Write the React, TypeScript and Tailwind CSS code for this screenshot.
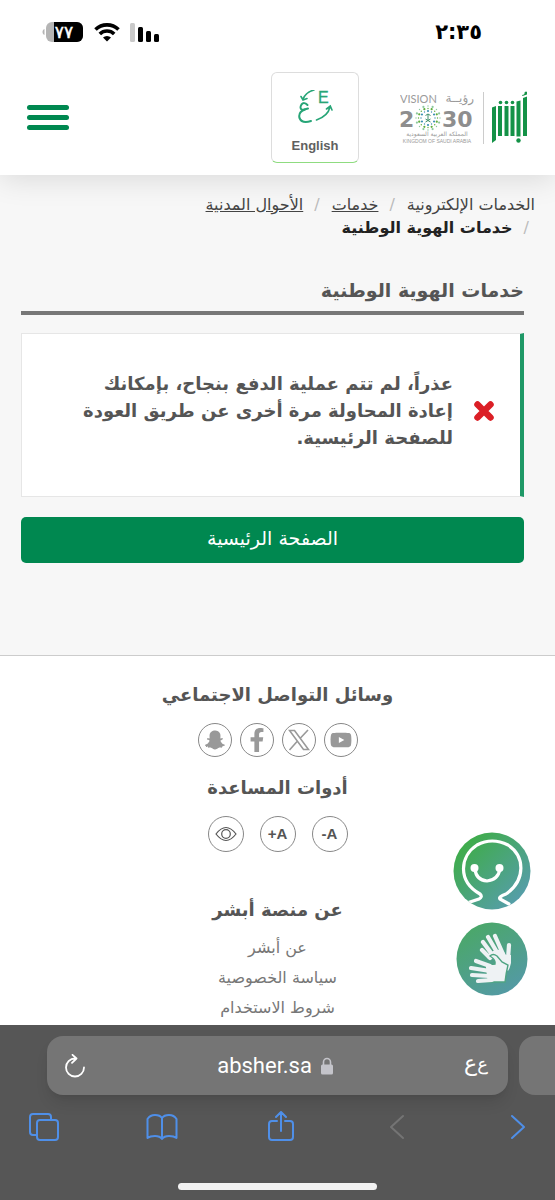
import type { ReactNode } from 'react'
import { FaFacebookF, FaSnapchatGhost, FaYoutube } from 'react-icons/fa'

const crumbs = [
  { label: 'الخدمات الإلكترونية', link: false },
  { label: 'خدمات', link: true },
  { label: 'الأحوال المدنية', link: true },
]

const aboutLinks = ['عن أبشر', 'سياسة الخصوصية', 'شروط الاستخدام']

// ── Status bar ───────────────────────────────────────────────────────────────
function StatusBar() {
  return (
    <div dir="ltr" className="flex h-16 items-center justify-between pl-[42px] pr-[73px] text-black">
      <div className="flex items-center gap-2.5">
        <svg viewBox="0 0 42 20" className="h-5 w-[42px]" aria-hidden="true">
          <path d="M2.500 7v6C1 12.500.5 11 .5 10s.5-2.500 2-3z" fill="#b5b5b5" />
          <rect x="4" y="0" width="37" height="20" rx="6" fill="#b5b5b5" />
          <path d="M12 0h23a6 6 0 0 1 6 6v8a6 6 0 0 1-6 6H12z" fill="#000" />
          <text x="22" y="16" textAnchor="middle" fontSize="17" fill="#fff" stroke="#fff" strokeWidth="0.500" fontFamily="DejaVu Sans, sans-serif">٧٧</text>
        </svg>
        <svg viewBox="0 0 26 19" className="h-[19px] w-[26px]" aria-hidden="true">
          <g fill="none" stroke="#000" strokeWidth="3.600">
            <path d="M1.500 6.500a16.500 16.500 0 0 1 23 0" />
            <path d="M5.800 11a10.300 10.300 0 0 1 14.400 0" />
          </g>
          <path d="M13 18.500 9 14.500a5.800 5.800 0 0 1 8 0z" fill="#000" />
        </svg>
        <svg viewBox="0 0 29 19" className="h-[19px] w-[29px]" aria-hidden="true">
          <rect x="0" y="0" width="5" height="19" rx="1.500" fill="#c9c9c9" />
          <rect x="8" y="4" width="5" height="15" rx="1.500" />
          <rect x="16" y="8" width="5" height="11" rx="1.500" />
          <rect x="24" y="11" width="5" height="8" rx="1.500" />
        </svg>
      </div>
      <span className="text-[21px] leading-7 font-bold">٢:٣٥</span>
    </div>
  )
}

// ── Logos ────────────────────────────────────────────────────────────────────
function VisionLogo() {
  const rings = [
    { r: 7, n: 12, color: '#3c8fb5' },
    { r: 9.500, n: 16, color: '#5fae3c' },
    { r: 12, n: 16, color: '#8cc9a0' },
  ]
  return (
    <svg viewBox="0 0 75 52" direction="ltr" className="h-[52px] w-[75px]" role="img" aria-label="Vision 2030">
      <g fill="#9a9a9a" fontFamily="DejaVu Sans, sans-serif">
        <text x="0" y="11" fontSize="11" fontFamily="Lato, sans-serif">VISION</text>
        <text x="74" y="10" fontSize="12" textAnchor="end">رؤيــة</text>
        <text x="-1" y="35" fontSize="22" fontWeight="700" fill="#8e8e8e">2</text>
        <text x="42" y="35" fontSize="22" fontWeight="700" fill="#8e8e8e">30</text>
        <text x="37" y="44" fontSize="6" textAnchor="middle">المملكة العربية السعودية</text>
        <text x="37" y="51" fontSize="5" textAnchor="middle" fontFamily="Liberation Sans, sans-serif">KINGDOM OF SAUDI ARABIA</text>
      </g>
      {rings.map((ring) =>
        Array.from({ length: ring.n }, (_, i) => {
          const a = (i / ring.n) * Math.PI * 2
          return (
            <circle
              key={`${ring.r}-${i}`}
              cx={28 + Math.cos(a) * ring.r}
              cy={26 + Math.sin(a) * ring.r}
              r={i % 2 ? 1.100 : 0.700}
              fill={ring.color}
            />
          )
        }),
      )}
      <g stroke="#3f8f6a" fill="none">
        <path d="M28 22v6M25.500 23.500q2.500-3 5 0M25.500 30l5-3M30.500 30l-5-3" />
      </g>
    </svg>
  )
}

function AbsherLogo() {
  return (
    <svg viewBox="0 0 36 53" className="h-[53px] w-9" role="img" aria-label="أبشر" fill="#149247">
      <path d="M0 16.500l4-1.500v34L0 52z" />
      <path d="M6 15h4v30H6z" />
      <path d="M12.500 15h4v30h-4z" />
      <path d="M18.500 15h4v30h-4z" />
      <path d="M24.500 10.500l4-1v36h-4z" />
      <path d="M31 7l4-1.500V45h-4z" />
      <path d="M30 4q3-.5 2.500-2.500Q34 0 35 1v2.500L30.500 5z" />
      <circle cx="8.500" cy="11.500" r="1.800" />
      <circle cx="14.500" cy="11.500" r="1.800" />
      <circle cx="20.500" cy="11.500" r="1.800" />
      <circle cx="26.500" cy="49.500" r="2.200" />
    </svg>
  )
}

function LanguageIcon() {
  return (
    <svg viewBox="0 0 36 36" direction="ltr" className="h-9 w-9" fill="none" stroke="#27a577" strokeWidth="1.600" strokeLinecap="round" aria-hidden="true">
      <path d="M17 0Q9 2 6 9M4 6.500 6 10l4-1.500" />
      <path d="M19.500 30Q31 26 33 17M29.500 19l3.800-3 1.700 4" />
      <path d="M10.500 15Q7 11.500 4.500 14.500 2 18.500 5.500 20l5.500-1.500" strokeWidth="2" />
      <path d="M8 19.500Q1 22 2.500 28 5 34 14 31" strokeWidth="2" />
      <text x="21" y="13" fontSize="16" fill="#27a577" strokeWidth="0.300" fontFamily="Liberation Sans, sans-serif">E</text>
    </svg>
  )
}

// ── Floating helpers ─────────────────────────────────────────────────────────
function AssistantIcon() {
  return (
    <svg viewBox="0 0 78 78" className="h-[78px] w-[78px]" aria-hidden="true">
      <defs>
        <linearGradient id="assistant" x1="0" y1="0" x2="1" y2="1">
          <stop offset="0.150" stopColor="#3fac4b" />
          <stop offset="1" stopColor="#5a9bbb" />
        </linearGradient>
        <clipPath id="assistant-clip">
          <circle cx="39" cy="39" r="38.500" />
        </clipPath>
      </defs>
      <circle cx="39" cy="39" r="38.500" fill="url(#assistant)" />
      <g clipPath="url(#assistant-clip)" fill="none" stroke="#fff" strokeLinecap="round" strokeLinejoin="round">
        <path d="M14 71l12-4q4-2 1-5C4 49 7 24 24 13q15-8 31 0c17 11 18 35-2 49q-8 3-6 5l9 5" strokeWidth="3.200" />
        <path d="M22 37q1 11 12 12 11-1 13-12" strokeWidth="3.200" />
      </g>
      <circle cx="21.500" cy="36" r="4" fill="#fff" />
      <circle cx="46.500" cy="36" r="4" fill="#fff" />
    </svg>
  )
}

function SignLanguageIcon() {
  return (
    <svg viewBox="0 0 72 74" className="h-[74px] w-[72px]" aria-hidden="true">
      <defs>
        <linearGradient id="sign" x1="0.200" y1="0" x2="0.800" y2="1">
          <stop offset="0" stopColor="#4aa866" />
          <stop offset="1" stopColor="#5499a8" />
        </linearGradient>
      </defs>
      <ellipse cx="36" cy="37" rx="35.500" ry="36.500" fill="url(#sign)" />
      {/* back hand */}
      <g stroke="#eef2f4" strokeWidth="4.200" strokeLinecap="round" fill="none">
        <path d="M26 28l8 8M27 20l11 15M32 15l10 17M39 14l8 18M53 23l-1 14" />
      </g>
      <path d="M31 34l6-5 9-2 4 6 5 0v8q-1 5-3 8l-9-7-7-6-4 1z" fill="#eef2f4" />
      {/* front hand */}
      <path d="M34 34q3-3 7 0l5 6 6 3q-2 8-3 17H31l-2-17 10-1q1-4-5-8z" fill="#eef2f4" stroke="#4ea482" strokeWidth="1.400" />
      <g stroke="#eef2f4" strokeWidth="4.200" strokeLinecap="round" fill="none">
        <path d="M20 39l14 5M15 46l19 3M16 53l17 1M22 59l14-1" />
      </g>
      <path d="M31 43h10l6 2v14H33z" fill="#eef2f4" />
    </svg>
  )
}

function RoundButton({ label, small, children }: { label: string; small?: boolean; children: ReactNode }) {
  const size = small ? 'h-[34px] w-[34px] text-[#999]' : 'h-9 w-9 text-[#555]'
  return (
    <button
      type="button"
      aria-label={label}
      className={`flex items-center justify-center rounded-full border border-[#888] bg-white ${size}`}
    >
      {children}
    </button>
  )
}

// ── Browser bar ──────────────────────────────────────────────────────────────
function ToolbarButton({ label, disabled, children }: { label: string; disabled?: boolean; children: ReactNode }) {
  return (
    <button
      type="button"
      aria-label={label}
      disabled={disabled}
      className={disabled ? 'text-[#747474]' : 'text-[#4f8fe8]'}
    >
      <svg viewBox="0 0 32 32" className="h-8 w-8" fill="none" stroke="currentColor" strokeWidth="2" strokeLinecap="round" strokeLinejoin="round">
        {children}
      </svg>
    </button>
  )
}

function BrowserBar() {
  return (
    <div dir="ltr" className="shrink-0 overflow-hidden bg-[#565656] pt-[11px] text-white">
      <div className="flex gap-[11px] pl-[47px]">
        <div className="flex h-[59px] min-w-0 flex-1 items-center justify-between rounded-2xl bg-[#757575] pl-4 pr-5 shadow-lg">
          <button type="button" aria-label="تحديث">
            <svg viewBox="0 0 24 24" className="h-6 w-6" fill="none" stroke="currentColor" strokeWidth="1.800" strokeLinecap="round" strokeLinejoin="round">
              <path d="M12 4.500a9 9 0 1 0 9 9M9.500.8l4 3.700-4.500 4.300" />
            </svg>
          </button>
          <div className="flex items-center gap-2">
            <span className="font-[Roboto,sans-serif] text-[22px] leading-7">absher.sa</span>
            <svg viewBox="0 0 14 18" className="h-[18px] w-3.5 text-[#c4c4ca]" aria-hidden="true">
              <rect x="1" y="7.500" width="12" height="10" rx="1.500" fill="currentColor" />
              <path d="M3.500 8V5a3.500 3.500 0 0 1 7 0v3" fill="none" stroke="currentColor" strokeWidth="1.600" />
            </svg>
          </div>
          <button type="button" aria-label="حجم النص" className="flex items-center pb-1 leading-7">
            <span className="text-[22px]">ع</span>
            <span className="text-lg">ع</span>
          </button>
        </div>
        <div className="h-[59px] w-9 rounded-l-2xl bg-[#757575]" />
      </div>
      <div className="flex items-center justify-between pl-7 pr-[22px] pt-4">
        <ToolbarButton label="علامات التبويب">
          <path d="M9 24H5a3 3 0 0 1-3-3V6a3 3 0 0 1 3-3h15a3 3 0 0 1 3 3v3" />
          <rect x="9" y="9" width="21" height="20" rx="3" />
        </ToolbarButton>
        <ToolbarButton label="الإشارات">
          <path d="M16 7Q14 4 9 4T1.500 8v19Q4 25 9 25t7 3q2-3 7-3t7.500 2V8Q28 4 23 4t-7 3v21" />
        </ToolbarButton>
        <ToolbarButton label="مشاركة">
          <path d="M12 10H7a3 3 0 0 0-3 3v13a3 3 0 0 0 3 3h18a3 3 0 0 0 3-3V13a3 3 0 0 0-3-3h-5M16 20V1M11 6l5-5 5 5" />
        </ToolbarButton>
        <ToolbarButton label="التالي" disabled>
          <path d="M20 5 8 16l12 11" />
        </ToolbarButton>
        <ToolbarButton label="السابق">
          <path d="m11 5 12 11-12 11" />
        </ToolbarButton>
      </div>
      <div className="mx-auto mt-10 mb-2.5 h-[7px] w-[199px] rounded-full bg-[#f2f2f2]" />
    </div>
  )
}

export default function App() {
  return (
    <div dir="rtl" className="flex h-screen flex-col bg-white font-['DejaVu_Sans',sans-serif] text-[#555]">
      <div className="relative flex min-h-0 flex-1 flex-col">
        <header className="z-10 bg-white pb-3 shadow-[0_4px_28px_rgba(0,0,0,0.12)]">
          <StatusBar />
          <div className="flex items-center px-[27px] pt-2">
            <a href="#absher"><AbsherLogo /></a>
            <span className="mr-2 ml-2 h-[52px] w-px bg-[#ccc]" />
            <a href="#vision"><VisionLogo /></a>
            <button type="button" className="mr-[41px] flex h-[91px] w-[88px] flex-col items-center justify-end rounded-md border border-[#ddd] border-b-[#8fdc80] bg-white pb-1.5">
              <LanguageIcon />
              <span className="mt-2.5 font-['Liberation_Sans',sans-serif] text-[13px] leading-5 font-bold text-[#606060]">English</span>
            </button>
            <button type="button" aria-label="القائمة" className="mr-auto flex w-[42px] flex-col gap-[5px]">
              <span className="h-[5px] rounded-full bg-[#008850]" />
              <span className="h-[5px] rounded-full bg-[#008850]" />
              <span className="h-[5px] rounded-full bg-[#008850]" />
            </button>
          </div>
        </header>

        <div className="min-h-0 flex-1 overflow-y-auto [scrollbar-width:none]">
          <main className="border-b border-[#ccc] bg-[#f7f7f7] pb-[92px]">
            {/* Breadcrumb */}
            <nav aria-label="مسار التنقل" className="px-5 pt-[18px]">
              <ol className="flex flex-wrap text-base leading-[23px] text-[#444]">
                {crumbs.map((c, i) => (
                  <li key={c.label} className="flex pl-1.5">
                    {i > 0 && <span className="pr-1.5 pl-[11px] text-[#bbb]">/</span>}
                    {c.link ? <a href="#crumb" className="underline">{c.label}</a> : <span>{c.label}</span>}
                  </li>
                ))}
                <li className="flex font-bold text-[#222]" aria-current="page">
                  <span className="pr-1.5 pl-[11px] font-normal text-[#bbb]">/</span>
                  خدمات الهوية الوطنية
                </li>
              </ol>
            </nav>

            <div className="pr-[31px] pl-[21px] pt-[38px]">
              <h1 className="border-b-4 border-[#777] pb-2 text-[19px] leading-[26px] font-bold">خدمات الهوية الوطنية</h1>

              {/* Result message */}
              <div role="alert" className="mt-[18px] flex items-center gap-5 border border-r-4 border-[#e6e6e6] border-r-[#1f9967] bg-white pr-[25px] pl-14 pt-9 pb-[45px]">
                <svg viewBox="0 0 22 22" className="h-[22px] w-[22px] shrink-0" aria-hidden="true">
                  <path d="M4.500 4.500l13 13M17.500 4.500l-13 13" stroke="#db1f26" strokeWidth="6.500" strokeLinecap="round" />
                </svg>
                <p className="text-lg leading-[27px] font-bold">
                  عذراً، لم تتم عملية الدفع بنجاح، بإمكانك إعادة المحاولة مرة أخرى عن طريق العودة للصفحة الرئيسية.
                </p>
              </div>

              <button type="button" className="mt-5 h-[46px] w-full rounded-[5px] bg-[#008850] pb-1 text-[19px] text-white">
                الصفحة الرئيسية
              </button>
            </div>
          </main>

          <footer className="flex flex-col items-center pt-6">
            <h2 className="text-lg leading-[30px] font-bold">وسائل التواصل الاجتماعي</h2>
            <div className="mt-[13px] flex gap-2">
              <RoundButton small label="YouTube"><FaYoutube className="h-[22px] w-[22px]" /></RoundButton>
              <RoundButton small label="X">
                <svg viewBox="0 0 22 22" className="h-[22px] w-[22px]" fill="none" stroke="currentColor" strokeWidth="1.600" aria-hidden="true">
                  <path d="M1.500 1.500h5L20.500 20.500h-5zM20 1l-8 8.500M9.500 12 1.500 21" />
                </svg>
              </RoundButton>
              <RoundButton small label="Facebook"><FaFacebookF className="h-6 w-6" /></RoundButton>
              <RoundButton small label="Snapchat"><FaSnapchatGhost className="h-5 w-5" /></RoundButton>
            </div>

            <h2 className="mt-4 text-lg leading-[30px] font-bold">أدوات المساعدة</h2>
            <div dir="ltr" className="mt-[13px] flex gap-4 font-['Liberation_Sans',sans-serif] text-[15px] font-bold">
              <RoundButton label="تباين الألوان">
                <svg viewBox="0 0 22 16" className="h-4 w-[22px]" fill="none" stroke="currentColor" strokeWidth="1.200" aria-hidden="true">
                  <path d="M1 8Q6 1.500 11 1.500T21 8Q16 14.500 11 14.500T1 8z" />
                  <circle cx="11" cy="8" r="4.300" />
                </svg>
              </RoundButton>
              <RoundButton label="تكبير الخط">+A</RoundButton>
              <RoundButton label="تصغير الخط">-A</RoundButton>
            </div>

            <h2 className="mt-[43px] text-lg leading-[30px] font-bold">عن منصة أبشر</h2>
            <ul className="mt-2 text-center text-base leading-[30px] text-[#777]">
              {aboutLinks.map((label) => (
                <li key={label}><a href="#about">{label}</a></li>
              ))}
            </ul>
          </footer>
        </div>

        {/* Floating buttons */}
        <div className="absolute right-6 bottom-[29px] z-20 flex flex-col items-center gap-3">
          <button type="button" aria-label="المساعد"><AssistantIcon /></button>
          <button type="button" aria-label="لغة الإشارة"><SignLanguageIcon /></button>
        </div>
      </div>

      <BrowserBar />
    </div>
  )
}
